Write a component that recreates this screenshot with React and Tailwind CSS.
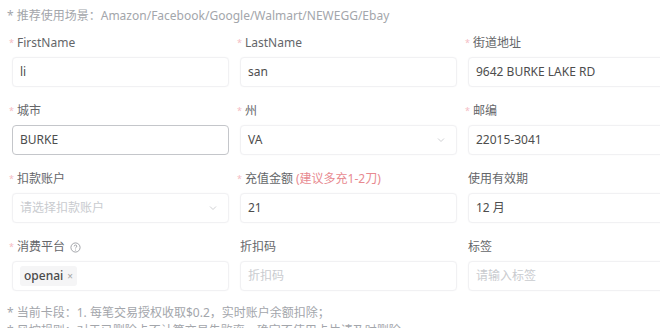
import React from "react";

const font = { fontFamily: '"Noto Sans", "Noto Sans CJK SC", sans-serif' };

function Chevron() {
  return (
    <svg width="10" height="10" viewBox="0 0 10 10" className="shrink-0">
      <path d="M2 3.5 L5 6.5 L8 3.5" fill="none" stroke="#cfd0d3" strokeWidth="1" />
    </svg>
  );
}

function Label({ text, req, extra, help }) {
  return (
    <div
      className={
        "h-[18px] mb-[5px] flex items-center text-[12px] leading-[18px] text-[#646669] " +
        (req ? "ml-[-3px]" : "ml-0")
      }
    >
      {req && <span className="text-[#f4bcc4] text-[9px] mr-[3px]">*</span>}
      <span>{text}</span>
      {extra && <span className="text-[#e88a90] ml-[3px]">{extra}</span>}
      {help && (
        <svg width="11" height="11" viewBox="0 0 12 12" className="ml-[5px]">
          <circle cx="6" cy="6" r="5" fill="none" stroke="#909399" strokeWidth="0.9" />
          <path d="M4.6 4.7 a1.4 1.4 0 1 1 1.9 1.3 c-0.4 0.2 -0.5 0.4 -0.5 0.9" fill="none" stroke="#909399" strokeWidth="0.9" />
          <circle cx="6" cy="8.6" r="0.55" fill="#909399" />
        </svg>
      )}
    </div>
  );
}

function Box({ children, focus, select }) {
  return (
    <div
      className={
        "h-[30px] flex items-center pl-[7px] pr-[10px] bg-white rounded-[4px] border text-[12px] " +
        (focus ? "border-[#c4c6ca]" : "border-[#f1f1f3] shadow-[0_0_2px_rgba(0,0,0,0.03)]")
      }
    >
      <div className="flex-1 min-w-0 flex items-center">{children}</div>
      {select && <Chevron />}
    </div>
  );
}

function Field({ label, req, extra, help, value, placeholder, focus, select, tag }) {
  return (
    <div>
      <Label text={label} req={req} extra={extra} help={help} />
      <Box focus={focus} select={select}>
        {tag ? (
          <span className="bg-[#f5f5f6] rounded-[3px] px-[4px] h-[20px] flex items-center text-[12px] text-[#4a4a4a] font-medium">
            openai<span className="ml-[4px] text-[#aaa] text-[10px]">×</span>
          </span>
        ) : value ? (
          <span className="text-[#4d4d4d]">{value}</span>
        ) : (
          <span className="text-[#c9cbcf]">{placeholder}</span>
        )}
      </Box>
    </div>
  );
}

export default function App() {
  return (
    <div className="w-[660px] h-[328px] overflow-hidden bg-white" style={font}>
      <div className="pt-[7px] pl-[7px] text-[12px] leading-[18px] text-[#a3a6ab]">
        * 推荐使用场景：Amazon/Facebook/Google/Walmart/NEWEGG/Ebay
      </div>
      <div className="mt-[9px] pl-[12px] grid grid-cols-[217px_217px_217px] gap-x-[11px] gap-y-[15px] w-[700px]">
        <Field label="FirstName" req value="li" />
        <Field label="LastName" req value="san" />
        <Field label="街道地址" req value="9642 BURKE LAKE RD" />
        <Field label="城市" req value="BURKE" focus />
        <Field label="州" req value="VA" select />
        <Field label="邮编" req value="22015-3041" />
        <Field label="扣款账户" req placeholder="请选择扣款账户" select />
        <Field label="充值金额" req extra="(建议多充1-2刀)" value="21" />
        <Field label="使用有效期" value="12 月" />
        <Field label="消费平台" req help tag />
        <Field label="折扣码" placeholder="折扣码" />
        <Field label="标签" placeholder="请输入标签" />
      </div>
      <div className="mt-[13px] pl-[7px] text-[12px] leading-[18px] text-[#a3a6ab]">
        <div>* 当前卡段：1. 每笔交易授权收取$0.2，实时账户余额扣除；</div>
        <div>* 风控规则：对于已删除卡不计算交易失败率，确定不使用卡片请及时删除。</div>
      </div>
    </div>
  );
}
